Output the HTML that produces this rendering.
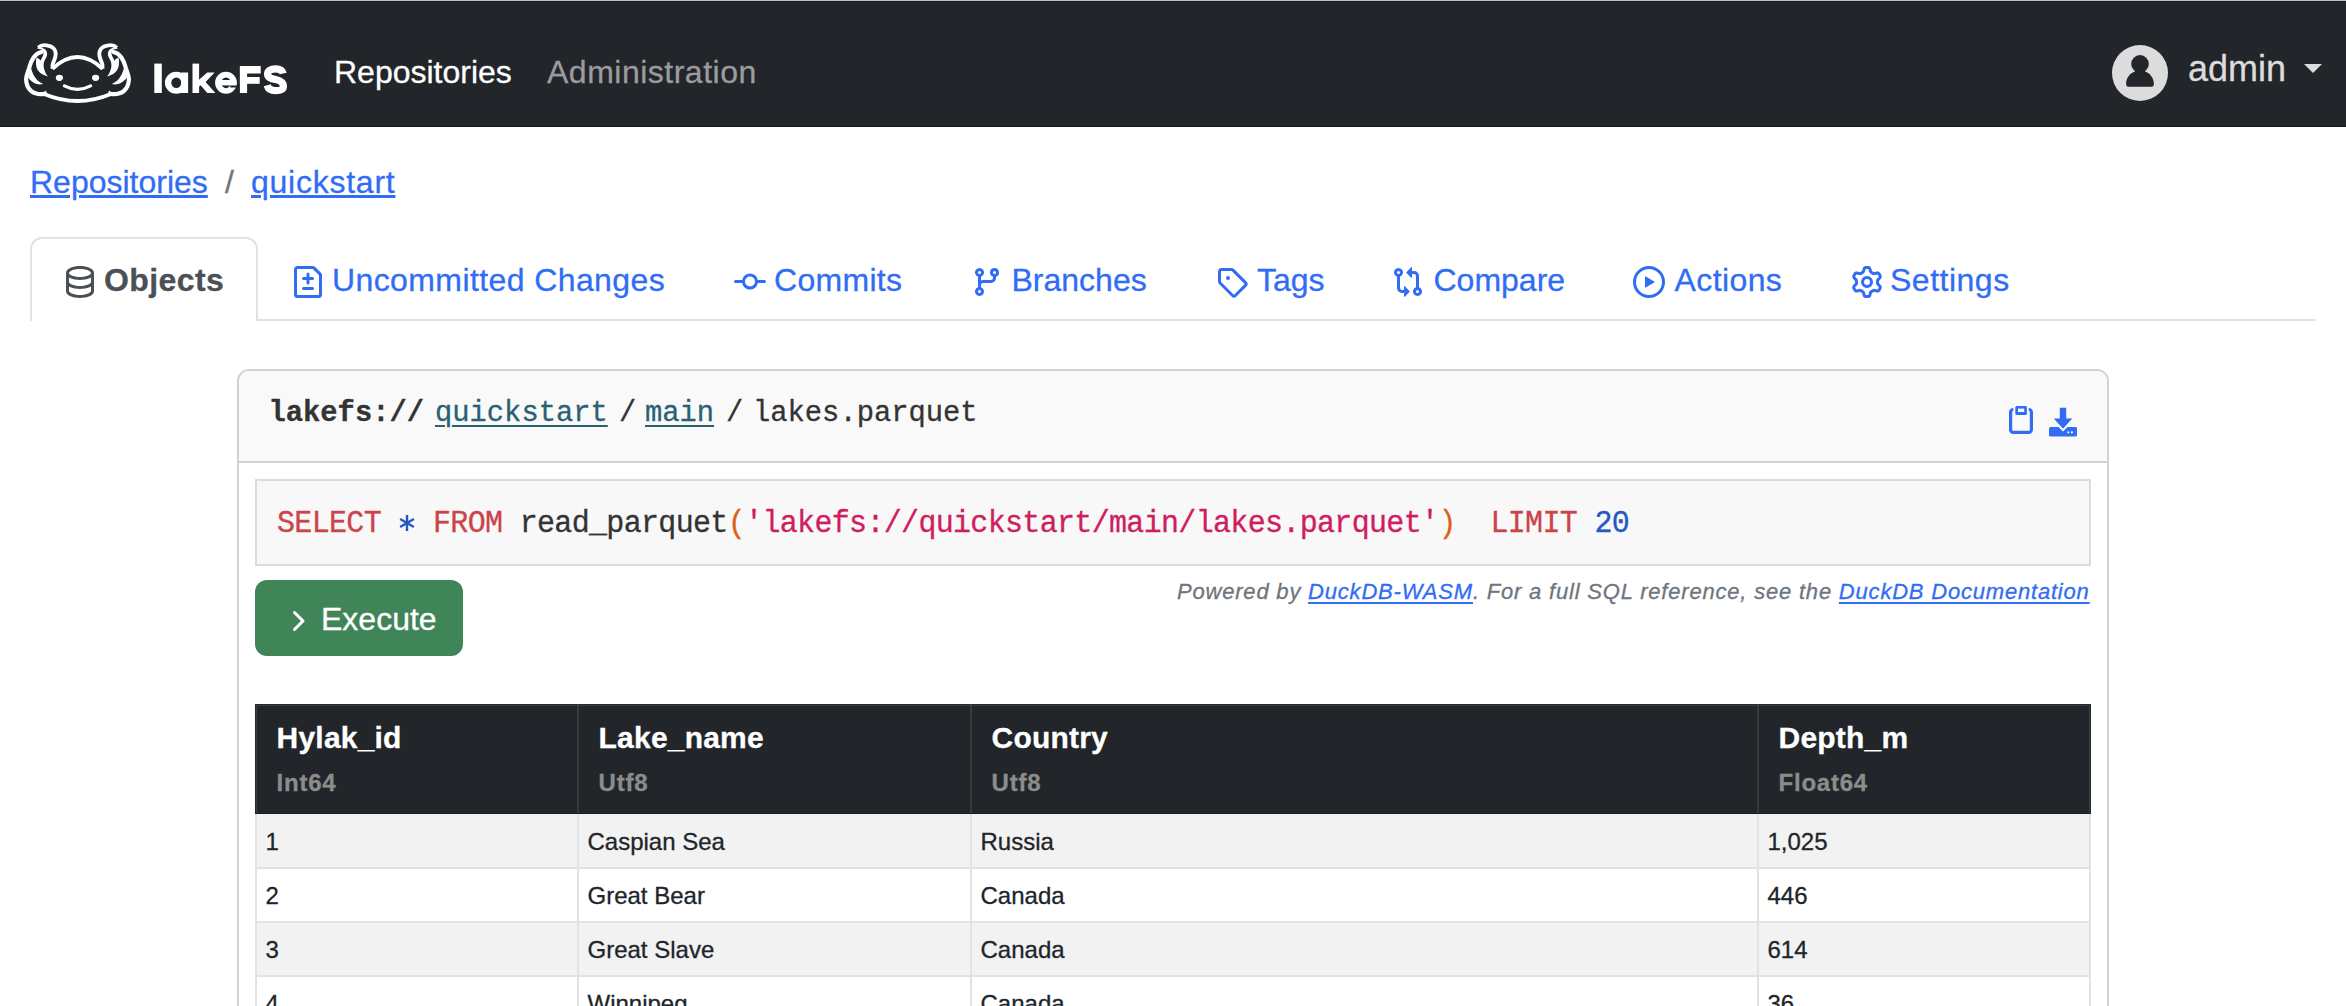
<!DOCTYPE html>
<html><head><meta charset="utf-8"><title>lakeFS</title>
<style>
html,body{margin:0;padding:0;}
body{width:2346px;height:1006px;overflow:hidden;position:relative;background:#fff;font-family:'Liberation Sans', sans-serif;}
.t{position:absolute;line-height:1;white-space:nowrap;-webkit-text-stroke:0.3px currentColor;}
.r{position:absolute;}
.lk{color:#316cf4;text-decoration:underline;text-decoration-thickness:2px;text-underline-offset:3px;}
</style></head><body>
<div class="r" style="left:0px;top:0px;width:2346px;height:1px;background:#b0c8cc"></div>
<div class="r" style="left:0px;top:1px;width:2346px;height:126px;background:#222529"></div>
<div class="r" style="left:0px;top:1px;width:2346px;height:1px;background:#1c1d21"></div>
<div class="r" style="left:0px;top:126px;width:2346px;height:1px;background:#17191d"></div>
<svg class="r" style="left:20px;top:38px;" width="120" height="68" viewBox="20 38 120 68"><path d="M41.6,52 C38.5,52.6 35.5,54.8 33.6,57.4 C31.6,60.2 30.2,63.8 29.2,67.8 C27.9,72.3 26.1,75.6 26.1,79.2 C26.2,83.2 27.3,87.6 31,90.8 C34.5,93.8 39.5,94.5 44.3,93.9" fill="none" stroke="#fff" stroke-width="4.2" stroke-linecap="round"/><path d="M30.8,67 C32.3,74 35.5,80.5 43.2,84.1 C37.8,85.3 32.5,83.5 28,77.6 Z" fill="#fff"/><path d="M36.4,57.6 C35.2,64.5 36.4,70.6 41,73.4 C43.5,74.9 46,75.6 47.9,76.4 C45.6,73.6 44,70.2 43.6,66.3 C43.3,62.8 44.6,60.2 46.2,57.6 C47.4,55.4 47.6,52.4 46,50.3 C44.2,48 40.8,47.2 38.2,47.5 C40.6,48.6 43,50.2 43.5,52.2 C43.9,54.2 42.6,56.6 41.2,59.2 L40.6,60.6 C39.6,59.3 38.2,58.3 36.4,57.6 Z" fill="#fff"/><path d="M38.3,47.6 C40.5,45.4 44,44.6 47.8,45.6 C51.5,46.3 55,48.8 55.6,52.5 C56.2,56.2 54.6,59.5 53.3,62.3 C52.4,64.3 52.2,66.3 52.6,68.6" fill="none" stroke="#fff" stroke-width="3.9" stroke-linejoin="round"/><path d="M37.2,48.4 L39.8,45.2 L41,49.5 Z" fill="#fff"/><path d="M43.6,92.6 L45.8,90.4 L47.6,94.6 Z" fill="#fff"/><ellipse cx="59.4" cy="77.8" rx="3.6" ry="3.1" fill="#fff"/><g transform="translate(155,0) scale(-1,1)"><path d="M41.6,52 C38.5,52.6 35.5,54.8 33.6,57.4 C31.6,60.2 30.2,63.8 29.2,67.8 C27.9,72.3 26.1,75.6 26.1,79.2 C26.2,83.2 27.3,87.6 31,90.8 C34.5,93.8 39.5,94.5 44.3,93.9" fill="none" stroke="#fff" stroke-width="4.2" stroke-linecap="round"/><path d="M30.8,67 C32.3,74 35.5,80.5 43.2,84.1 C37.8,85.3 32.5,83.5 28,77.6 Z" fill="#fff"/><path d="M36.4,57.6 C35.2,64.5 36.4,70.6 41,73.4 C43.5,74.9 46,75.6 47.9,76.4 C45.6,73.6 44,70.2 43.6,66.3 C43.3,62.8 44.6,60.2 46.2,57.6 C47.4,55.4 47.6,52.4 46,50.3 C44.2,48 40.8,47.2 38.2,47.5 C40.6,48.6 43,50.2 43.5,52.2 C43.9,54.2 42.6,56.6 41.2,59.2 L40.6,60.6 C39.6,59.3 38.2,58.3 36.4,57.6 Z" fill="#fff"/><path d="M38.3,47.6 C40.5,45.4 44,44.6 47.8,45.6 C51.5,46.3 55,48.8 55.6,52.5 C56.2,56.2 54.6,59.5 53.3,62.3 C52.4,64.3 52.2,66.3 52.6,68.6" fill="none" stroke="#fff" stroke-width="3.9" stroke-linejoin="round"/><path d="M37.2,48.4 L39.8,45.2 L41,49.5 Z" fill="#fff"/><path d="M43.6,92.6 L45.8,90.4 L47.6,94.6 Z" fill="#fff"/><ellipse cx="59.4" cy="77.8" rx="3.6" ry="3.1" fill="#fff"/></g><path d="M52.4,68.8 Q77.5,45.2 102.6,68.8" fill="none" stroke="#fff" stroke-width="3.7"/><path d="M44,94 Q77.5,108 111,94" fill="none" stroke="#fff" stroke-width="3.8"/><path d="M64.4,85.8 Q77.5,92.8 90.6,85.8" fill="none" stroke="#fff" stroke-width="3.2" stroke-linecap="round"/></svg>
<svg class="r" style="left:140px;top:50px;" width="160" height="60" viewBox="140 50 160 60"><g fill="#fff"><rect x="154.3" y="63.6" width="7.5" height="29.4"/><path fill-rule="evenodd" d="M164.9,82.8 a11.4,11 0 1,0 22.8,0 a11.4,11 0 1,0 -22.8,0 Z M171.3,82.8 a5,5.2 0 1,0 10,0 a5,5.2 0 1,0 -10,0 Z"/><rect x="181.3" y="72.5" width="6.8" height="20.5"/><rect x="192.5" y="63.6" width="6.6" height="29.4"/><path d="M199,79.8 L207.3,72.5 L214.6,72.5 L205.6,81.9 L215.4,93 L207.3,93 L200.6,85.3 L199,86.8 Z"/><path fill-rule="evenodd" d="M215.1,82.8 a10.9,11 0 1,0 21.8,0 a10.9,11 0 1,0 -21.8,0 Z M221.2,82.8 a4.8,5.4 0 1,0 9.6,0 a4.8,5.4 0 1,0 -9.6,0 Z"/><rect x="220" y="80" width="13" height="5.4"/><path d="M230.2,85.4 L237.5,85.4 L237.5,87.6 L230.2,87.4 Z" fill="#222529"/><rect x="239.9" y="66" width="7.2" height="27"/><rect x="239.9" y="66" width="20.8" height="7.5"/><rect x="239.9" y="77" width="19.8" height="6.8"/><path d="M283.2,73.5 C282.4,70 279.5,68.8 275.4,68.8 C270.8,68.8 267.6,70.8 267.6,74 C267.6,77.6 271.2,78.6 275.6,79.5 C280.6,80.6 283.4,82.5 283.4,86.4 C283.4,90.4 279.6,90.6 275.3,90.6 C271,90.6 268.2,89 267.2,85.2" fill="none" stroke="#fff" stroke-width="7.3"/></g></svg>
<div class="t" style="left:334.0px;top:55.91px;font-size:32px;color:#ffffff;font-family:'Liberation Sans', sans-serif;font-weight:400;letter-spacing:0px;">Repositories</div>
<div class="t" style="left:547.0px;top:55.91px;font-size:32px;color:#9b9c9e;font-family:'Liberation Sans', sans-serif;font-weight:400;letter-spacing:0.5px;">Administration</div>
<svg class="r" style="left:2112px;top:45px;" width="56" height="56" viewBox="0 0 56 56"><circle cx="28" cy="28" r="28" fill="#dcdcdc"/><path d="M22.6,26.6 C17.6,28.6 14.1,33.6 14.1,38.9 C14.1,40.8 15.4,41.8 17.2,41.8 H38.8 C40.6,41.8 41.9,40.8 41.9,38.9 C41.9,33.6 38.4,28.6 33.4,26.6 C31.8,27.6 30,28.2 28,28.2 C26,28.2 24.2,27.6 22.6,26.6 Z" fill="#222529"/><circle cx="28" cy="18.9" r="8.8" fill="#222529"/><rect x="23" y="24" width="10" height="5" fill="#222529"/></svg>
<div class="t" style="left:2188.0px;top:50.52px;font-size:36px;color:#dcdcdc;font-family:'Liberation Sans', sans-serif;font-weight:400;letter-spacing:0px;">admin</div>
<svg class="r" style="left:2304px;top:64px;" width="18" height="9" viewBox="0 0 18 9"><path d="M0 0H18L9 9Z" fill="#dcdcdc"/></svg>
<div class="t" style="left:30.0px;top:165.51px;font-size:32px;color:#316cf4;font-family:'Liberation Sans', sans-serif;font-weight:400;letter-spacing:0px;text-decoration:underline;text-decoration-thickness:2.5px;text-underline-offset:2px;">Repositories</div>
<div class="t" style="left:225.0px;top:165.51px;font-size:32px;color:#6e757c;font-family:'Liberation Sans', sans-serif;font-weight:400;letter-spacing:0px;">/</div>
<div class="t" style="left:251.0px;top:165.51px;font-size:32px;color:#316cf4;font-family:'Liberation Sans', sans-serif;font-weight:400;letter-spacing:0.75px;text-decoration:underline;text-decoration-thickness:2.5px;text-underline-offset:2px;">quickstart</div>
<div class="r" style="left:30px;top:237px;width:228px;height:84px;border:2px solid #dfe2e6;border-bottom:none;border-radius:12px 12px 0 0;background:#fff;box-sizing:border-box"></div>
<div class="r" style="left:258px;top:319px;width:2058px;height:2px;background:#dfe2e6"></div>
<svg class="r" style="left:64px;top:266px;" width="32" height="32" viewBox="0 0 16 16"><path d="M1 3.5c0-.626.292-1.165.7-1.59.406-.422.956-.767 1.579-1.041C4.525.32 6.195 0 8 0c1.805 0 3.475.32 4.722.869.622.274 1.172.62 1.578 1.04.408.426.7.965.7 1.591v9c0 .626-.292 1.165-.7 1.59-.406.422-.956.767-1.579 1.041C11.475 15.68 9.805 16 8 16c-1.805 0-3.475-.32-4.722-.869-.622-.274-1.172-.62-1.578-1.04-.408-.426-.7-.965-.7-1.591Zm1.5 0c0 .133.058.318.282.551.227.237.591.483 1.101.707C4.898 5.205 6.353 5.5 8 5.5c1.646 0 3.101-.295 4.118-.742.508-.224.873-.471 1.1-.708.224-.232.282-.417.282-.55 0-.133-.058-.318-.282-.551-.227-.237-.591-.483-1.101-.707C11.102 1.795 9.647 1.5 8 1.5c-1.646 0-3.101.295-4.118.742-.508.224-.873.471-1.1.708-.224.232-.282.417-.282.55Zm0 4.5c0 .133.058.318.282.551.227.237.591.483 1.101.707C4.898 9.705 6.353 10 8 10c1.646 0 3.101-.295 4.118-.742.508-.224.873-.471 1.1-.708.224-.232.282-.417.282-.55V5.724c-.241.15-.503.286-.778.407C11.475 6.68 9.805 7 8 7c-1.805 0-3.475-.32-4.722-.869a6.335 6.335 0 0 1-.778-.407Zm0 2.225V12.5c0 .133.058.318.282.55.227.237.592.484 1.1.708 1.016.447 2.471.742 4.118.742 1.647 0 3.102-.295 4.117-.742.51-.224.874-.47 1.101-.707.224-.233.282-.418.282-.551v-2.275c-.241.15-.503.285-.778.406-1.247.549-2.917.869-4.722.869-1.805 0-3.475-.32-4.722-.869a6.335 6.335 0 0 1-.778-.406Z" fill="#4a5056"/></svg>
<svg class="r" style="left:292px;top:266px;" width="32" height="32" viewBox="0 0 16 16"><path d="M1 1.75C1 .784 1.784 0 2.75 0h7.586c.464 0 .909.184 1.237.513l2.914 2.914c.329.328.513.773.513 1.237v9.586A1.75 1.75 0 0 1 13.25 16H2.75A1.75 1.75 0 0 1 1 14.25Zm1.75-.25a.25.25 0 0 0-.25.25v12.5c0 .138.112.25.25.25h10.5a.25.25 0 0 0 .25-.25V4.664a.25.25 0 0 0-.073-.177l-2.914-2.914a.25.25 0 0 0-.177-.073ZM8 3.25a.75.75 0 0 1 .75.75v1.5h1.5a.75.75 0 0 1 0 1.5h-1.5v1.5a.75.75 0 0 1-1.5 0V7h-1.5a.75.75 0 0 1 0-1.5h1.5V4A.75.75 0 0 1 8 3.25Zm-3 8a.75.75 0 0 1 .75-.75h4.5a.75.75 0 0 1 0 1.5h-4.5a.75.75 0 0 1-.75-.75Z" fill="#316cf4"/></svg>
<svg class="r" style="left:734px;top:265.5px;" width="32" height="32" viewBox="0 0 16 16"><path d="M11.93 8.5a4.002 4.002 0 0 1-7.86 0H.75a.75.75 0 0 1 0-1.5h3.32a4.002 4.002 0 0 1 7.86 0h3.32a.75.75 0 0 1 0 1.5Zm-1.43-.75a2.5 2.5 0 1 0-5 0 2.5 2.5 0 0 0 5 0Z" fill="#316cf4"/></svg>
<svg class="r" style="left:971px;top:266px;" width="32" height="32" viewBox="0 0 16 16"><path d="M9.5 3.25a2.25 2.25 0 1 1 3 2.122V6A2.5 2.5 0 0 1 10 8.5H6a1 1 0 0 0-1 1v1.128a2.251 2.251 0 1 1-1.5 0V5.372a2.25 2.25 0 1 1 1.5 0v1.836A2.493 2.493 0 0 1 6 7h4a1 1 0 0 0 1-1v-.628A2.25 2.25 0 0 1 9.5 3.25Zm-6 0a.75.75 0 1 0 1.5 0 .75.75 0 0 0-1.5 0Zm8.25-.75a.75.75 0 1 0 0 1.5.75.75 0 0 0 0-1.5ZM4.25 12a.75.75 0 1 0 0 1.5.75.75 0 0 0 0-1.5Z" fill="#316cf4"/></svg>
<svg class="r" style="left:1216px;top:266px;" width="32" height="32" viewBox="0 0 16 16"><path d="M1 7.775V2.75C1 1.784 1.784 1 2.75 1h5.025c.464 0 .91.184 1.238.513l6.25 6.25a1.75 1.75 0 0 1 0 2.474l-5.026 5.026a1.75 1.75 0 0 1-2.474 0l-6.25-6.25A1.752 1.752 0 0 1 1 7.775Zm1.5 0c0 .066.026.13.073.177l6.25 6.25a.25.25 0 0 0 .354 0l5.025-5.025a.25.25 0 0 0 0-.354l-6.25-6.25a.25.25 0 0 0-.177-.073H2.75a.25.25 0 0 0-.25.25ZM6 5a1 1 0 1 1 0 2 1 1 0 0 1 0-2Z" fill="#316cf4"/></svg>
<svg class="r" style="left:1392px;top:266px;" width="32" height="32" viewBox="0 0 16 16"><path d="M9.573.677A.25.25 0 0 1 10 .854V2.5h1A2.5 2.5 0 0 1 13.5 5v5.628a2.251 2.251 0 1 1-1.5 0V5a1 1 0 0 0-1-1h-1v1.646a.25.25 0 0 1-.427.177L7.177 3.427a.25.25 0 0 1 0-.354ZM6 12v-1.646a.25.25 0 0 1 .427-.177l2.396 2.396a.25.25 0 0 1 0 .354l-2.396 2.396A.25.25 0 0 1 6 15.146V13.5H5A2.5 2.5 0 0 1 2.5 11V5.372a2.25 2.25 0 1 1 1.5 0V11a1 1 0 0 0 1 1ZM4 3.25a.75.75 0 1 0-1.5 0 .75.75 0 0 0 1.5 0ZM12.75 12a.75.75 0 1 0 0 1.5.75.75 0 0 0 0-1.5Z" fill="#316cf4"/></svg>
<svg class="r" style="left:1633px;top:266px;" width="32" height="32" viewBox="0 0 16 16"><path d="M8 0a8 8 0 1 1 0 16A8 8 0 0 1 8 0ZM1.5 8a6.5 6.5 0 1 0 13 0 6.5 6.5 0 0 0-13 0Zm4.879-2.773 4.264 2.559a.25.25 0 0 1 0 .428l-4.264 2.559A.25.25 0 0 1 6 10.559V5.442a.25.25 0 0 1 .379-.215Z" fill="#316cf4"/></svg>
<svg class="r" style="left:1851px;top:266px;" width="32" height="32" viewBox="0 0 16 16"><path d="M8 0a8.2 8.2 0 0 1 .701.031C9.444.095 9.99.645 10.16 1.29l.288 1.107c.018.066.079.158.212.224.231.114.454.243.668.386.123.082.233.09.299.071l1.103-.303c.644-.176 1.392.021 1.82.63.27.385.506.792.704 1.218.315.675.111 1.422-.364 1.891l-.814.806c-.049.048-.098.147-.088.294.016.257.016.515 0 .772-.01.147.038.246.088.294l.814.806c.475.469.679 1.216.364 1.891a7.977 7.977 0 0 1-.704 1.217c-.428.61-1.176.807-1.82.63l-1.102-.302c-.067-.019-.177-.011-.3.071a5.909 5.909 0 0 1-.668.386c-.133.066-.194.158-.211.224l-.29 1.106c-.168.646-.715 1.196-1.458 1.26a8.006 8.006 0 0 1-1.402 0c-.743-.064-1.289-.614-1.458-1.26l-.289-1.106c-.018-.066-.079-.158-.212-.224a5.738 5.738 0 0 1-.668-.386c-.123-.082-.233-.09-.299-.071l-1.103.303c-.644.176-1.392-.021-1.820-.63a8.12 8.12 0 0 1-.704-1.218c-.315-.675-.111-1.422.363-1.891l.815-.806c.05-.048.098-.147.088-.294a6.214 6.214 0 0 1 0-.772c.01-.147-.038-.246-.088-.294l-.815-.806C.635 6.045.431 5.298.746 4.623a7.92 7.92 0 0 1 .704-1.217c.428-.61 1.176-.807 1.82-.63l1.102.302c.067.019.177.011.3-.071.214-.143.437-.272.668-.386.133-.066.194-.158.211-.224l.29-1.106C6.009.645 6.556.095 7.299.03 7.530.01 7.764 0 8 0Zm-.571 1.525c-.036.003-.108.036-.137.146l-.289 1.105c-.147.561-.549.967-.998 1.189-.173.086-.34.183-.5.29-.417.278-.97.423-1.529.27l-1.103-.303c-.109-.03-.175.016-.195.045-.22.312-.412.644-.573.99-.014.031-.021.11.059.19l.815.806c.411.406.562.957.53 1.456a4.709 4.709 0 0 0 0 .582c.032.499-.119 1.05-.53 1.456l-.815.806c-.081.08-.073.159-.059.19.162.346.353.677.573.989.02.03.085.076.195.046l1.102-.303c.56-.153 1.113-.008 1.53.27.161.107.328.204.501.29.447.222.85.629.997 1.189l.289 1.105c.029.109.101.143.137.146a6.6 6.6 0 0 0 1.142 0c.036-.003.108-.036.137-.146l.289-1.105c.147-.561.549-.967.998-1.189.173-.086.34-.183.5-.29.417-.278.97-.423 1.529-.27l1.103.303c.109.029.175-.016.195-.045.22-.313.411-.644.573-.99.014-.031.021-.11-.059-.19l-.815-.806c-.411-.406-.562-.957-.53-1.456a4.709 4.709 0 0 0 0-.582c-.032-.499.119-1.05.53-1.456l.815-.806c.081-.08.073-.159.059-.19a6.464 6.464 0 0 0-.573-.989c-.02-.03-.085-.076-.195-.046l-1.102.303c-.56.153-1.113.008-1.53-.27a4.440 4.440 0 0 0-.501-.29c-.447-.222-.85-.629-.997-1.189l-.289-1.105c-.029-.11-.101-.143-.137-.146a6.6 6.6 0 0 0-1.142 0ZM11 8a3 3 0 1 1-6 0 3 3 0 0 1 6 0ZM9.5 8a1.5 1.5 0 1 0-3.001.001A1.5 1.5 0 0 0 9.5 8Z" fill="#316cf4"/></svg>
<div class="t" style="left:104.0px;top:263.91px;font-size:32px;color:#4a5056;font-family:'Liberation Sans', sans-serif;font-weight:700;letter-spacing:0.4px;">Objects</div>
<div class="t" style="left:332.0px;top:263.91px;font-size:32px;color:#316cf4;font-family:'Liberation Sans', sans-serif;font-weight:400;letter-spacing:0.4px;">Uncommitted Changes</div>
<div class="t" style="left:774.0px;top:263.91px;font-size:32px;color:#316cf4;font-family:'Liberation Sans', sans-serif;font-weight:400;letter-spacing:0.3px;">Commits</div>
<div class="t" style="left:1011.5px;top:263.91px;font-size:32px;color:#316cf4;font-family:'Liberation Sans', sans-serif;font-weight:400;letter-spacing:0px;">Branches</div>
<div class="t" style="left:1257.0px;top:263.91px;font-size:32px;color:#316cf4;font-family:'Liberation Sans', sans-serif;font-weight:400;letter-spacing:0px;">Tags</div>
<div class="t" style="left:1433.5px;top:263.91px;font-size:32px;color:#316cf4;font-family:'Liberation Sans', sans-serif;font-weight:400;letter-spacing:0px;">Compare</div>
<div class="t" style="left:1674.5px;top:263.91px;font-size:32px;color:#316cf4;font-family:'Liberation Sans', sans-serif;font-weight:400;letter-spacing:0.4px;">Actions</div>
<div class="t" style="left:1890.0px;top:263.91px;font-size:32px;color:#316cf4;font-family:'Liberation Sans', sans-serif;font-weight:400;letter-spacing:0.5px;">Settings</div>
<div class="r" style="left:237px;top:369px;width:1872px;height:800px;border:2px solid #d2d2d2;border-radius:12px;box-sizing:border-box;background:#fff;overflow:hidden"></div>
<div class="r" style="left:239px;top:371px;width:1868px;height:90px;background:#f9f9f9;border-radius:10px 10px 0 0"></div>
<div class="r" style="left:239px;top:461px;width:1868px;height:2px;background:#d2d2d2"></div>
<div class="t" style="left:268.5px;top:399.74px;font-size:28.8px;color:#333333;font-family:'Liberation Mono', monospace;font-weight:700;letter-spacing:0px;">lakefs://</div>
<div class="t" style="left:435.0px;top:399.74px;font-size:28.8px;color:#296173;font-family:'Liberation Mono', monospace;font-weight:400;letter-spacing:0px;text-decoration:underline;text-decoration-thickness:2px;text-underline-offset:4px;">quickstart</div>
<div class="t" style="left:619.0px;top:399.74px;font-size:28.8px;color:#333333;font-family:'Liberation Mono', monospace;font-weight:400;letter-spacing:0px;">/</div>
<div class="t" style="left:645.0px;top:399.74px;font-size:28.8px;color:#296173;font-family:'Liberation Mono', monospace;font-weight:400;letter-spacing:0px;text-decoration:underline;text-decoration-thickness:2px;text-underline-offset:4px;">main</div>
<div class="t" style="left:726.0px;top:399.74px;font-size:28.8px;color:#333333;font-family:'Liberation Mono', monospace;font-weight:400;letter-spacing:0px;">/</div>
<div class="t" style="left:753.0px;top:399.74px;font-size:28.8px;color:#333333;font-family:'Liberation Mono', monospace;font-weight:400;letter-spacing:0px;">lakes.parquet</div>
<svg class="r" style="left:2009px;top:405px;" width="24" height="30" viewBox="0 0 24 30"><rect x="1.6" y="4.5" width="20.8" height="22.9" rx="2.6" fill="none" stroke="#316cf4" stroke-width="3.2"/><rect x="4.3" y="1" width="15.4" height="7" fill="#f9f9f9"/><rect x="6.3" y="1" width="11.6" height="9" rx="1.6" fill="#316cf4"/><rect x="9" y="3.6" width="6.2" height="3.4" fill="#f9f9f9"/></svg>
<svg class="r" style="left:2049px;top:407px;" width="28" height="30" viewBox="0 0 28 30"><path d="M10.8 0.8 h6.4 v10.7 h6 l-9.2 10.2 l-9.2 -10.2 h6z" fill="#316cf4"/><path d="M0 21.5 q0 -1.5 1.5 -1.5 h8 l4.5 4.6 l4.5 -4.6 h8 q1.5 0 1.5 1.5 v6.5 q0 1.5 -1.5 1.5 h-25 q-1.5 0 -1.5 -1.5z" fill="#316cf4"/><circle cx="19.3" cy="25.3" r="1.1" fill="#f9f9f9"/><circle cx="22.9" cy="25.3" r="1.1" fill="#f9f9f9"/></svg>
<div class="r" style="left:255px;top:479px;width:1836px;height:87px;border:2px solid #dcdcdc;box-sizing:border-box;background:#f8f8f8"></div>
<div class="t" style="left:277.0px;top:509.12px;font-size:30px;color:#333;font-family:'Liberation Mono', monospace;font-weight:400;letter-spacing:-0.67px;white-space:pre;transform:scaleY(1.075);transform-origin:0 22.98px;"><span style="color:#cb444a">SELECT</span> <span style="color:#2657c3;display:inline-block;width:17.33px;height:10px;position:relative"></span> <span style="color:#cb444a">FROM</span> <span style="color:#333">read_parquet</span><span style="color:#d9621b">(</span><span style="color:#cf1d5f">'lakefs://quickstart/main/lakes.parquet'</span><span style="color:#d9621b">)</span>  <span style="color:#cb444a">LIMIT</span> <span style="color:#2657c3">20</span></div>
<svg class="r" style="left:398px;top:514px;" width="18" height="18" viewBox="0 0 18 18"><g stroke="#2657c3" stroke-width="2.4" stroke-linecap="butt"><line x1="9" y1="1" x2="9" y2="17"/><line x1="2.1" y1="5" x2="15.9" y2="13"/><line x1="2.1" y1="13" x2="15.9" y2="5"/></g></svg>
<div class="r" style="left:255px;top:580px;width:208px;height:76px;background:#408558;border-radius:12px"></div>
<svg class="r" style="left:281px;top:605px;" width="32" height="32" viewBox="0 0 16 16"><path d="M6.22 3.22a.749.749 0 0 1 1.06 0l4.25 4.25a.749.749 0 0 1 0 1.06l-4.25 4.25a.749.749 0 0 1-1.042-.018.749.749 0 0 1-.018-1.042L9.94 8 6.22 4.28a.749.749 0 0 1 0-1.06Z" fill="#fff"/></svg>
<div class="t" style="left:321.0px;top:602.91px;font-size:32px;color:#ffffff;font-family:'Liberation Sans', sans-serif;font-weight:400;letter-spacing:0px;">Execute</div>
<div class="t" style="left:1177.0px;top:581.17px;font-size:22px;color:#6e757c;font-family:'Liberation Sans', sans-serif;font-weight:400;letter-spacing:0px;font-style:italic;letter-spacing:0.8px;">Powered by <span class="lk">DuckDB-WASM</span>. For a full SQL reference, see the <span class="lk">DuckDB Documentation</span></div>
<div class="r" style="left:255px;top:704px;width:1836px;height:111px;background:#222529"></div>
<div class="r" style="left:255px;top:704px;width:1836px;height:1px;background:#24272b"></div>
<div class="r" style="left:256px;top:705px;width:1834px;height:1px;background:#3a3e41"></div>
<div class="r" style="left:577px;top:704px;width:2px;height:111px;background:#383b3e"></div>
<div class="r" style="left:970px;top:704px;width:2px;height:111px;background:#383b3e"></div>
<div class="r" style="left:1757px;top:704px;width:2px;height:111px;background:#383b3e"></div>
<div class="r" style="left:255px;top:704px;width:1px;height:111px;background:#24272b"></div>
<div class="r" style="left:256px;top:705px;width:1px;height:110px;background:#3a3e41"></div>
<div class="r" style="left:2090px;top:704px;width:1px;height:111px;background:#24272b"></div>
<div class="r" style="left:2089px;top:705px;width:1px;height:110px;background:#3a3e41"></div>
<div class="r" style="left:255px;top:813px;width:1836px;height:1px;background:#1b1e21"></div>
<div class="t" style="left:276.6px;top:722.60px;font-size:30px;color:#ffffff;font-family:'Liberation Sans', sans-serif;font-weight:700;letter-spacing:0.2px;">Hylak_id</div>
<div class="t" style="left:276.6px;top:770.88px;font-size:24px;color:#8c8c8c;font-family:'Liberation Sans', sans-serif;font-weight:700;letter-spacing:0.75px;">Int64</div>
<div class="t" style="left:598.6px;top:722.60px;font-size:30px;color:#ffffff;font-family:'Liberation Sans', sans-serif;font-weight:700;letter-spacing:0.2px;">Lake_name</div>
<div class="t" style="left:598.6px;top:770.88px;font-size:24px;color:#8c8c8c;font-family:'Liberation Sans', sans-serif;font-weight:700;letter-spacing:0.75px;">Utf8</div>
<div class="t" style="left:991.6px;top:722.60px;font-size:30px;color:#ffffff;font-family:'Liberation Sans', sans-serif;font-weight:700;letter-spacing:0.2px;">Country</div>
<div class="t" style="left:991.6px;top:770.88px;font-size:24px;color:#8c8c8c;font-family:'Liberation Sans', sans-serif;font-weight:700;letter-spacing:0.75px;">Utf8</div>
<div class="t" style="left:1778.6px;top:722.60px;font-size:30px;color:#ffffff;font-family:'Liberation Sans', sans-serif;font-weight:700;letter-spacing:0.2px;">Depth_m</div>
<div class="t" style="left:1778.6px;top:770.88px;font-size:24px;color:#8c8c8c;font-family:'Liberation Sans', sans-serif;font-weight:700;letter-spacing:0.75px;">Float64</div>
<div class="r" style="left:255px;top:814px;width:1836px;height:54px;background:#f2f2f2"></div>
<div class="r" style="left:255px;top:868px;width:1836px;height:54px;background:#ffffff"></div>
<div class="r" style="left:255px;top:922px;width:1836px;height:54px;background:#f2f2f2"></div>
<div class="r" style="left:255px;top:976px;width:1836px;height:54px;background:#ffffff"></div>
<div class="r" style="left:255px;top:867px;width:1836px;height:2px;background:#dfe2e6"></div>
<div class="r" style="left:255px;top:921px;width:1836px;height:2px;background:#dfe2e6"></div>
<div class="r" style="left:255px;top:975px;width:1836px;height:2px;background:#dfe2e6"></div>
<div class="t" style="left:265.5px;top:829.68px;font-size:24px;color:#212529;font-family:'Liberation Sans', sans-serif;font-weight:400;letter-spacing:0px;">1</div>
<div class="t" style="left:587.5px;top:829.68px;font-size:24px;color:#212529;font-family:'Liberation Sans', sans-serif;font-weight:400;letter-spacing:0px;">Caspian Sea</div>
<div class="t" style="left:980.5px;top:829.68px;font-size:24px;color:#212529;font-family:'Liberation Sans', sans-serif;font-weight:400;letter-spacing:0px;">Russia</div>
<div class="t" style="left:1767.5px;top:829.68px;font-size:24px;color:#212529;font-family:'Liberation Sans', sans-serif;font-weight:400;letter-spacing:0px;">1,025</div>
<div class="t" style="left:265.5px;top:883.68px;font-size:24px;color:#212529;font-family:'Liberation Sans', sans-serif;font-weight:400;letter-spacing:0px;">2</div>
<div class="t" style="left:587.5px;top:883.68px;font-size:24px;color:#212529;font-family:'Liberation Sans', sans-serif;font-weight:400;letter-spacing:0px;">Great Bear</div>
<div class="t" style="left:980.5px;top:883.68px;font-size:24px;color:#212529;font-family:'Liberation Sans', sans-serif;font-weight:400;letter-spacing:0px;">Canada</div>
<div class="t" style="left:1767.5px;top:883.68px;font-size:24px;color:#212529;font-family:'Liberation Sans', sans-serif;font-weight:400;letter-spacing:0px;">446</div>
<div class="t" style="left:265.5px;top:937.68px;font-size:24px;color:#212529;font-family:'Liberation Sans', sans-serif;font-weight:400;letter-spacing:0px;">3</div>
<div class="t" style="left:587.5px;top:937.68px;font-size:24px;color:#212529;font-family:'Liberation Sans', sans-serif;font-weight:400;letter-spacing:0px;">Great Slave</div>
<div class="t" style="left:980.5px;top:937.68px;font-size:24px;color:#212529;font-family:'Liberation Sans', sans-serif;font-weight:400;letter-spacing:0px;">Canada</div>
<div class="t" style="left:1767.5px;top:937.68px;font-size:24px;color:#212529;font-family:'Liberation Sans', sans-serif;font-weight:400;letter-spacing:0px;">614</div>
<div class="t" style="left:265.5px;top:991.68px;font-size:24px;color:#212529;font-family:'Liberation Sans', sans-serif;font-weight:400;letter-spacing:0px;">4</div>
<div class="t" style="left:587.5px;top:991.68px;font-size:24px;color:#212529;font-family:'Liberation Sans', sans-serif;font-weight:400;letter-spacing:0px;">Winnipeg</div>
<div class="t" style="left:980.5px;top:991.68px;font-size:24px;color:#212529;font-family:'Liberation Sans', sans-serif;font-weight:400;letter-spacing:0px;">Canada</div>
<div class="t" style="left:1767.5px;top:991.68px;font-size:24px;color:#212529;font-family:'Liberation Sans', sans-serif;font-weight:400;letter-spacing:0px;">36</div>
<div class="r" style="left:255px;top:814px;width:2px;height:300px;background:#dfe2e6"></div>
<div class="r" style="left:577px;top:814px;width:2px;height:300px;background:#dfe2e6"></div>
<div class="r" style="left:970px;top:814px;width:2px;height:300px;background:#dfe2e6"></div>
<div class="r" style="left:1757px;top:814px;width:2px;height:300px;background:#dfe2e6"></div>
<div class="r" style="left:2089px;top:814px;width:2px;height:300px;background:#dfe2e6"></div>
</body></html>
